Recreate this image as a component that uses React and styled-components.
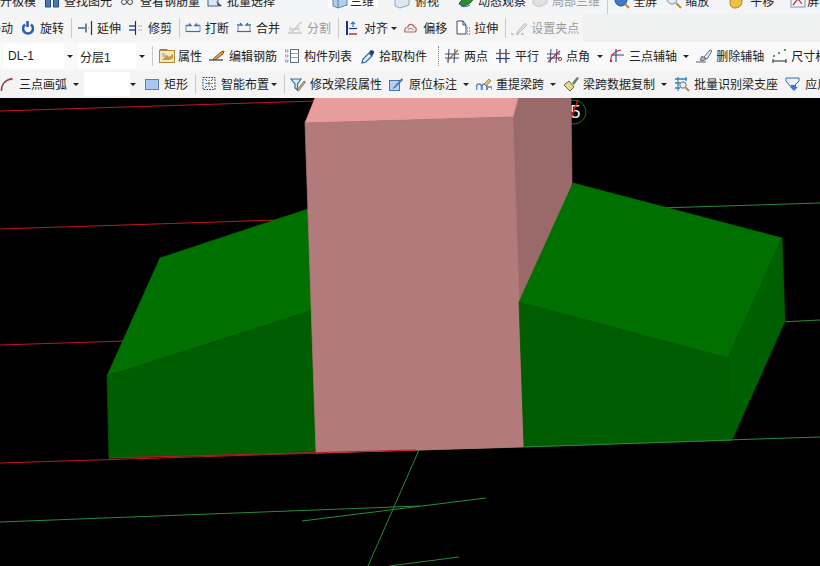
import React from "react";
import styled, { createGlobalStyle } from "styled-components";

const Global = createGlobalStyle`
  html, body { margin: 0; padding: 0; background: #000; }
  body { width: 820px; height: 566px; overflow: hidden; }
  #root { width: 820px; height: 566px; }
`;

const Page = styled.div`
  width: 820px;
  height: 566px;
  display: flex;
  flex-direction: column;
  overflow: hidden;
  font-family: "Noto Sans CJK SC", "Liberation Sans", sans-serif;
  font-size: 12px;
  color: #222;
`;

const Bar = styled.div`
  flex: none;
  height: ${(p) => p.$h || 28}px;
  display: flex;
  align-items: center;
  overflow: hidden;
  white-space: nowrap;
  background: ${(p) => p.$bg};
`;

const TopBar = styled(Bar)`
  align-items: flex-start;
  & > * { margin-top: -6px; height: 14px; }
`;

const Band = styled.div`
  display: flex;
  align-items: center;
  height: 100%;
  padding-right: 4px;
  background: ${(p) => p.$bg};
`;

const Tool = styled.div`
  flex: none;
  display: flex;
  align-items: center;
  margin-left: ${(p) => p.$ml || 0}px;
  color: ${(p) => (p.$off ? "#9c9c9c" : "#222")};
  line-height: 14px;
`;

const Label = styled.span`
  margin-left: ${(p) => p.$g || 0}px;
`;

const Arrow = styled.span`
  flex: none;
  width: 0;
  height: 0;
  margin-left: ${(p) => p.$ml || 0}px;
  border-left: 3px solid transparent;
  border-right: 3px solid transparent;
  border-top: 3px solid #222;
`;

const Sep = styled.span`
  flex: none;
  width: 1px;
  height: 20px;
  margin-left: ${(p) => p.$ml || 0}px;
  background: #c9c9c9;
`;

const DotSep = styled(Sep)`
  width: 0;
  background: none;
  border-left: 1px dotted #8a8a8a;
`;

const Combo = styled.div`
  flex: none;
  width: ${(p) => p.$w}px;
  height: 24px;
  margin-left: ${(p) => p.$ml || 0}px;
  padding-left: ${(p) => p.$pl || 0}px;
  box-sizing: border-box;
  display: flex;
  align-items: center;
  background: #fff;
  font-family: "Liberation Sans", "Noto Sans CJK SC", sans-serif;
  color: #222;
`;

const ActiveBtn = styled(Tool)`
  background: #fff;
  padding: 0 4px;
`;

const Canvas = styled.svg`
  flex: none;
  display: block;
  width: 820px;
  height: 468px;
  background: #000;
`;

const IcoSvg = styled.svg`
  flex: none;
`;

const Ico = ({ w = 16, children }) => (
  <IcoSvg width={w} height="16" viewBox={`0 0 ${w} 16`} fill="none">
    {children}
  </IcoSvg>
);

const Face = ({ points, fill }) => <polygon points={points} fill={fill} stroke={fill} strokeWidth="0.7" />;

const icons = {
  rotate: (
    <Ico w={12}>
      <path d="M3 4.5A5 5 0 1 0 9 4.5" stroke="#2a5db5" strokeWidth="2.6" />
      <path d="M5.5 1v6" stroke="#2a5db5" strokeWidth="2.6" />
    </Ico>
  ),
  extend: (
    <Ico w={15}>
      <path d="M0 8h7" stroke="#2b58a8" strokeWidth="1.4" />
      <path d="M8 3.5v9M13.5 1v14" stroke="#333" strokeWidth="1.2" />
      <path d="M10 8h2" stroke="#888" strokeDasharray="1 1" />
    </Ico>
  ),
  trim: (
    <Ico w={14}>
      <path d="M0 6h6M0 10h6" stroke="#2b58a8" strokeWidth="1.3" />
      <path d="M6.5 1v14" stroke="#333" strokeWidth="1.2" />
      <path d="M9 6h5M9 10h5" stroke="#999" strokeDasharray="1.5 1" />
    </Ico>
  ),
  breakI: (
    <Ico>
      <path d="M1 5.5h5l-2-2M15 5.5h-5l2-2" stroke="#3570b8" strokeWidth="1.3" />
      <path d="M1 5v7M15 5v7" stroke="#7c93ad" />
      <path d="M1 11.5h14" stroke="#3570b8" strokeWidth="1.2" />
    </Ico>
  ),
  merge: (
    <Ico w={14}>
      <path d="M0 5h5l-2-2M14 5H9l2-2" stroke="#3570b8" strokeWidth="1.3" />
      <path d="M1 5v6M13 5v6" stroke="#7c93ad" />
      <path d="M0 11.5h14" stroke="#3570b8" strokeWidth="1.2" />
    </Ico>
  ),
  split: (
    <Ico>
      <path d="M1 13h14M2 9h10M4 13l8-9 3-2" stroke="#c9c9c9" strokeWidth="1.3" />
      <path d="M3 6v7M12 6v7" stroke="#d6d6d6" />
    </Ico>
  ),
  align: (
    <Ico w={12}>
      <path d="M1 1v14" stroke="#1c2f86" strokeWidth="2" />
      <path d="M3 14h8" stroke="#c23a3a" strokeWidth="1.6" />
      <path d="M3 8.5h8" stroke="#1c2f86" strokeWidth="1.2" />
      <path d="M7 7V2M5 4l2-2 2 2" stroke="#2f7fc0" strokeWidth="1.2" />
    </Ico>
  ),
  offset: (
    <Ico w={13}>
      <path d="M1 12c-1-3 1-5 3-5 0-3 5-4 6 0 3 0 3 5 0 5z" fill="#fbe7df" stroke="#b56a5c" strokeWidth="1.2" />
      <path d="M4 10c0-2 5-2 5 0" stroke="#5a7fae" />
    </Ico>
  ),
  stretch: (
    <Ico w={15}>
      <path d="M2 1h6l3 4v9H2z" fill="#fff" stroke="#3a4a66" />
      <path d="M8 1v4h3" stroke="#3a4a66" />
      <path d="M12 8h3M12 11h3M12 14h3" stroke="#555" strokeDasharray="1 1" />
    </Ico>
  ),
  grip: (
    <Ico w={17}>
      <path d="M7 11l7-8 2 2-7 7-3 1z" fill="#ddd" stroke="#c2c2c2" />
      <path d="M0 14h3M5 14h3M10 14h3" stroke="#bdbdbd" strokeWidth="1.3" />
    </Ico>
  ),
  attr: (
    <Ico>
      <rect x="0.5" y="2.5" width="15" height="12" fill="#f8e6b8" stroke="#a98a3e" />
      <path d="M1 3V1.5h7V3" stroke="#c5622e" />
      <path d="M3 12l5-5 2 2 4-3v4l-3 2z" fill="#c99a38" />
      <path d="M3 8h5M3 6h3" stroke="#7f9ec0" />
    </Ico>
  ),
  rebar: (
    <Ico>
      <path d="M0 12h14" stroke="#222" strokeWidth="1.1" />
      <path d="M4 11l8-7 3-1-1 3-8 6z" fill="#e8a24c" stroke="#8a4a22" />
    </Ico>
  ),
  list: (
    <Ico w={14}>
      <rect x="5.5" y="1.5" width="8" height="13" fill="#fff" stroke="#5a7088" />
      <path d="M6 5.5h7M6 9.5h7" stroke="#8fa5bb" />
      <path d="M0 2h3v2H0zM0 7h3v2H0zM0 12h3v2H0z" stroke="#4a5a6c" strokeWidth="0.8" strokeDasharray="1 0.6" />
    </Ico>
  ),
  pick: (
    <Ico w={14}>
      <path d="M1 15l1-4 6-6 3 3-6 6z" fill="#d7ecfb" stroke="#2f66b0" strokeWidth="1.2" />
      <path d="M8 4l2-2 3 1 0 2-2 3z" fill="#24406f" />
    </Ico>
  ),
  two: (
    <Ico w={14}>
      <path d="M4 1l-1 14M10 1L9 15M0 6h14M0 10h14" stroke="#3a4a78" strokeWidth="1" />
      <path d="M2 13L13 2" stroke="#a0762c" strokeWidth="1.3" />
    </Ico>
  ),
  para: (
    <Ico w={14}>
      <path d="M4 1v14M10 1v14" stroke="#2c3f86" strokeWidth="1.3" />
      <path d="M0 5.5h14" stroke="#b23a4a" strokeWidth="1.2" />
      <path d="M0 10.5h14" stroke="#2c3f86" strokeWidth="1.2" />
    </Ico>
  ),
  angle: (
    <Ico w={15}>
      <path d="M4 1L3 15M10 1L9 15M0 6h13M0 10h13" stroke="#3a4a78" strokeWidth="1" />
      <path d="M1 14L13 3" stroke="#c2283c" strokeWidth="1.3" />
      <circle cx="13" cy="11" r="1.6" stroke="#c2283c" />
    </Ico>
  ),
  three: (
    <Ico w={15}>
      <path d="M7 14V1M2 7h13" stroke="#2c3f86" strokeWidth="1.1" />
      <path d="M2 13C1 7 6 3 12 2" stroke="#c2283c" strokeWidth="1.2" />
      <circle cx="2" cy="13" r="1.2" fill="#c2283c" />
    </Ico>
  ),
  del: (
    <Ico>
      <path d="M0 14h10" stroke="#777" strokeWidth="1.2" />
      <path d="M4 12l2-4 4 3-3 2z" fill="#c9b27e" stroke="#6d5aa5" />
      <path d="M8 9l6-7 2 1-5 8z" fill="#dfe7ef" stroke="#5c6e88" />
    </Ico>
  ),
  size: (
    <Ico w={15}>
      <path d="M1 11v4M14 11v4M1 13h13" stroke="#222" />
      <rect x="1" y="7" width="2" height="2" fill="#5a9a5a" />
      <rect x="6" y="4" width="2" height="2" fill="#5a9a5a" />
      <rect x="12" y="1" width="2" height="2" fill="#5a9a5a" />
    </Ico>
  ),
  arc: (
    <Ico w={13}>
      <path d="M1.5 15C1 9 5 4 11 3" stroke="#8a4040" strokeWidth="1.5" />
      <circle cx="11.5" cy="3" r="1.2" fill="#c23a3a" />
    </Ico>
  ),
  rect: (
    <Ico w={14}>
      <rect x="0.5" y="3.5" width="13" height="10" fill="#a9c7f2" stroke="#5a7fb8" />
    </Ico>
  ),
  smart: (
    <Ico w={14}>
      <rect x="1" y="1.5" width="12" height="12" stroke="#333" strokeDasharray="1.6 1.2" />
      <path d="M7 4v7M3.5 7.5h7" stroke="#333" strokeDasharray="1 1" />
      <path d="M3 3l2 2M11 3l-2 2M3 12l2-2M11 12l-2-2" stroke="#2f66b0" />
    </Ico>
  ),
  funnel: (
    <Ico>
      <path d="M1 3h10L7.5 8v6L5 12V8z" fill="#dcecf8" stroke="#2f6fa8" strokeWidth="1.2" />
      <path d="M7 14l7-9 1.5 1-7 9z" fill="#c8b48a" stroke="#6a5a3e" strokeWidth="0.7" />
    </Ico>
  ),
  orig: (
    <Ico w={15}>
      <rect x="0.5" y="4.5" width="10" height="10" fill="#b9d1ee" stroke="#4a70a8" />
      <path d="M3 13l8-9 2-2 1 2-8 8z" fill="#4a78b4" />
    </Ico>
  ),
  re: (
    <Ico>
      <path d="M0.5 14v-3c0-4 5-4 5 0v3M6 14v-3c0-4 5-4 5 0v3" stroke="#5f87b8" strokeWidth="1.6" />
      <path d="M8 8l5-5 2 2-5 5z" fill="#e0b878" stroke="#8a6a3e" strokeWidth="0.7" />
      <path d="M11 14v-3h5v3" stroke="#5f87b8" strokeWidth="1.4" />
    </Ico>
  ),
  brush: (
    <Ico>
      <path d="M1 9l5-4 5 6-4 4z" fill="#e8d890" stroke="#6d6a3a" />
      <path d="M9 7l5-6 2 1-5 7z" fill="#6a7f5a" />
    </Ico>
  ),
  batch: (
    <Ico>
      <path d="M1 3h12M1 7h5M1 12h5" stroke="#2f7fb8" strokeWidth="1.3" />
      <path d="M4 1v14M12 1v4" stroke="#2f7fb8" strokeWidth="1.1" />
      <circle cx="9" cy="9" r="3.2" fill="#e6eef6" stroke="#5a7088" />
      <path d="M11 11l4 4" stroke="#b98a3e" strokeWidth="2" />
    </Ico>
  ),
  apply: (
    <Ico>
      <path d="M1 2h13v3l-5 5H5L1 5z" fill="#eaf2fb" stroke="#3a6aa8" />
      <path d="M6 9h5v2h2l-4 4-4-4h1z" fill="#3f78c4" />
    </Ico>
  ),
  find: (
    <Ico>
      <path d="M1.5 4h5v10h-5zM9.5 4h5v10h-5z" fill="#4a78b4" stroke="#27477a" />
    </Ico>
  ),
  rebarQty: (
    <Ico>
      <circle cx="4" cy="9" r="2.5" stroke="#444" />
      <circle cx="10" cy="9" r="2.5" stroke="#444" />
    </Ico>
  ),
  batchSel: (
    <Ico>
      <rect x="1" y="3" width="10" height="10" fill="#dce7f4" stroke="#3a5f96" />
      <path d="M9 8l6 5-3 .5z" fill="#444" />
    </Ico>
  ),
  cube: (
    <Ico>
      <path d="M1 5l9-3 5 2v8l-9 3-5-2z" fill="#b6cfe8" stroke="#5a7fa8" />
      <path d="M1 5l5 2v8M6 7l9-3" stroke="#5a7fa8" />
    </Ico>
  ),
  top: (
    <Ico>
      <path d="M1 5l9-3 5 2v8l-9 3-5-2z" fill="#dfe8f1" stroke="#8ba4bf" />
    </Ico>
  ),
  dyn: (
    <Ico w={18}>
      <path d="M1 11C4 5 10 2 17 1c-1 6-5 11-12 12z" fill="#2f8a3e" stroke="#1f5f2a" />
      <path d="M3 13c2 1 6 1 9-1" stroke="#3a6aa8" />
    </Ico>
  ),
  local: (
    <Ico>
      <path d="M1 5l8-4 6 3v6l-8 4-6-3z" fill="#e1e1e1" stroke="#c6c6c6" />
    </Ico>
  ),
  full: (
    <Ico>
      <circle cx="7" cy="7" r="6" fill="#3f78c4" stroke="#23508f" />
      <path d="M11 11l4 4" stroke="#b98a3e" strokeWidth="2" />
    </Ico>
  ),
  zoom: (
    <Ico>
      <circle cx="6" cy="6" r="5" fill="#e3edf7" stroke="#7a8ea5" />
      <path d="M10 10l5 5" stroke="#b98a3e" strokeWidth="2" />
    </Ico>
  ),
  pan: (
    <Ico>
      <path d="M2 8c0-5 11-6 12 0 0 4-3 7-7 7S2 12 2 8z" fill="#f0c040" stroke="#a97a1e" />
    </Ico>
  ),
  rotScreen: (
    <Ico>
      <rect x="1" y="3" width="14" height="11" fill="#f4f4f4" stroke="#7f93ad" />
      <path d="M3 12l5-6 4 5" stroke="#c2283c" strokeWidth="1.2" />
      <path d="M10 5l4-3" stroke="#3a9a4a" strokeWidth="1.4" />
    </Ico>
  ),
};

const T = ({ ml, icon, g = 4, label, off }) => (
  <Tool $ml={ml} $off={off}>
    {icons[icon]}
    <Label $g={g}>{label}</Label>
  </Tool>
);

export default function App() {
  return (
    <Page>
      <Global />
      <TopBar $h={14} $bg="#f3f4f6">
        <Tool>
          <Label>开极模</Label>
        </Tool>
        <T ml={8} icon="find" label="查找图元" />
        <T ml={8} icon="rebarQty" label="查看钢筋量" />
        <T ml={7} icon="batchSel" label="批量选择" />
        <ActiveBtn $ml={53}>
          {icons.cube}
          <Label $g={2}>三维</Label>
        </ActiveBtn>
        <T ml={16} icon="top" g={5} label="俯视" />
        <T ml={19} icon="dyn" g={2} label="动态观察" />
        <T ml={6} icon="local" label="局部三维" off />
        <Sep $ml={7} />
        <T ml={6} icon="full" g={3} label="全屏" />
        <T ml={9} icon="zoom" g={3} label="缩放" />
        <T ml={19} icon="pan" g={6} label="平移" />
        <T ml={16} icon="rotScreen" g={1} label="屏幕旋转" />
      </TopBar>

      <Bar $bg="#eff0f0">
        <Band $bg="#f5f5f6">
          <Tool $ml={-11}>
            <Label>移动</Label>
          </Tool>
          <T ml={9} icon="rotate" g={6} label="旋转" />
          <Sep $ml={7} />
          <T ml={6} icon="extend" label="延伸" />
          <T ml={8} icon="trim" g={5} label="修剪" />
          <Sep $ml={7} />
          <T ml={5} icon="breakI" label="打断" />
          <T ml={8} icon="merge" g={5} label="合并" />
          <T ml={7} icon="split" label="分割" off />
          <Sep $ml={7} />
          <T ml={7} icon="align" g={6} label="对齐" />
          <Arrow $ml={3} />
          <T ml={7} icon="offset" g={6} label="偏移" />
          <T ml={8} icon="stretch" label="拉伸" />
          <Sep $ml={7} />
          <T ml={5} icon="grip" g={3} label="设置夹点" off />
        </Band>
      </Bar>

      <Bar $bg="#f9f9f9">
        <Combo $ml={4} $w={60} $pl={4}>
          DL-1
        </Combo>
        <Arrow $ml={3} />
        <Combo $ml={5} $w={58} $pl={2}>
          分层1
        </Combo>
        <Arrow $ml={3} />
        <Sep $ml={7} />
        <T ml={6} icon="attr" g={3} label="属性" />
        <T ml={7} icon="rebar" label="编辑钢筋" />
        <T ml={8} icon="list" g={5} label="构件列表" />
        <T ml={9} icon="pick" label="拾取构件" />
        <DotSep $ml={11} />
        <T ml={6} icon="two" g={5} label="两点" />
        <T ml={8} icon="para" g={5} label="平行" />
        <T ml={8} icon="angle" g={4} label="点角" />
        <Arrow $ml={7} />
        <T ml={6} icon="three" g={5} label="三点辅轴" />
        <Arrow $ml={6} />
        <T ml={7} icon="del" label="删除辅轴" />
        <T ml={8} icon="size" g={4} label="尺寸标注" />
      </Bar>

      <Bar $bg="#f4f4f4">
        <T ml={0} icon="arc" g={6} label="三点画弧" />
        <Arrow $ml={6} />
        <Combo $ml={5} $w={46} />
        <Arrow $ml={0} />
        <T ml={9} icon="rect" g={5} label="矩形" />
        <Sep $ml={7} />
        <T ml={6} icon="smart" g={5} label="智能布置" />
        <Arrow $ml={2} />
        <Sep $ml={7} />
        <T ml={5} icon="funnel" g={4} label="修改梁段属性" />
        <T ml={7} icon="orig" g={5} label="原位标注" />
        <Arrow $ml={6} />
        <T ml={7} icon="re" g={4} label="重提梁跨" />
        <Arrow $ml={6} />
        <T ml={7} icon="brush" g={4} label="梁跨数据复制" />
        <Arrow $ml={6} />
        <T ml={7} icon="batch" g={4} label="批量识别梁支座" />
        <T ml={7} icon="apply" g={4} label="应用到其他" />
      </Bar>

      <Canvas viewBox="0 98 820 468">
        <g fill="none" stroke="#c01820" strokeWidth="1">
          <path d="M0 111L315 101" />
          <path d="M0 229L310 219" />
          <path d="M0 345L125 341" />
          <path d="M0 463L416 450" />
        </g>
        <g fill="none" stroke="#2a8a3a" strokeWidth="1">
          <path d="M416 450L820 437" />
          <path d="M660 208L820 203" />
          <path d="M780 322L820 320" />
          <path d="M0 522L420 506" />
          <path d="M302 521L486 498" />
          <path d="M419 450L368 566" />
          <path d="M389 566L459 557" />
          <circle cx="574" cy="112" r="12" strokeWidth="0.8" />
        </g>
        <text x="570" y="118" fill="#e8e8e8" fontSize="19" fontFamily="Liberation Sans, sans-serif">
          5
        </text>
        <path d="M571 118L578 100" stroke="#e01a26" strokeWidth="1.4" fill="none" />
        <Face points="513,117 518,98 571,98 572,183 560,240 519,320" fill="#9a6a6a" />
        <Face points="160,258 107,376 313,310 308,209" fill="#007000" />
        <Face points="107,376 313,310 316,453 109,458" fill="#005c00" />
        <Face points="305,123 315,98 518,98 513,117" fill="#e89c9c" />
        <Face points="305,123 513,117 524,447 316,453" fill="#b27a7a" />
        <Face points="573,183 782,238 728,358 519,302" fill="#007000" />
        <Face points="782,238 785,321 732,440 728,358" fill="#005f00" />
        <Face points="519,302 728,358 732,440 524,447" fill="#005c00" />
        <path d="M109 458L416 450" stroke="#c01820" fill="none" />
        <path d="M524 447L732 440" stroke="#2a8a3a" fill="none" />
      </Canvas>
    </Page>
  );
}
